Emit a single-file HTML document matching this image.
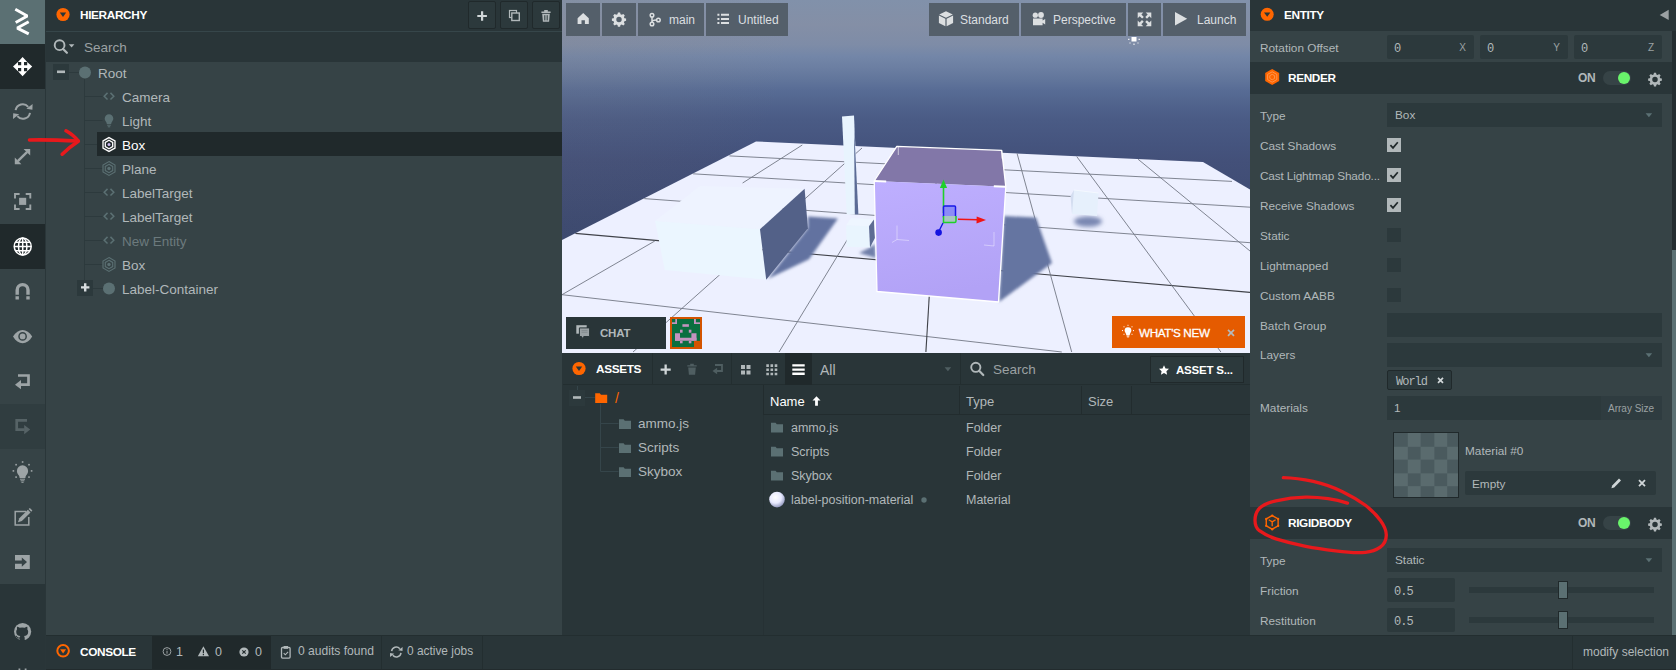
<!DOCTYPE html>
<html lang="en">
<head>
<meta charset="utf-8">
<title>PlayCanvas Editor</title>
<style>
*{box-sizing:border-box;margin:0;padding:0}
html,body{width:1676px;height:670px;overflow:hidden;background:#364346}
body{position:relative;font-family:"Liberation Sans",sans-serif;font-size:13px;color:#b1b8ba;-webkit-font-smoothing:antialiased}
.abs{position:absolute}
svg{position:absolute;overflow:visible}
.t{position:absolute;white-space:nowrap;line-height:1}
.hd{font-weight:bold;color:#fff;font-size:11.8px;letter-spacing:-0.35px}
.mono{font-family:"Liberation Mono",monospace;font-size:12px;letter-spacing:-1px;margin-top:0.5px}

/* left toolbar */
#tb{left:0;top:0;width:45px;height:670px;background:#364346}
#tb .logo{left:0;top:0;width:45px;height:44px;background:#5b7073}
#tb .act{left:0;width:45px;height:45px;background:#20292b}
#tb .dis{left:0;width:45px;height:45px;background:#303d40}
#tb .bot{left:0;top:584px;width:45px;height:86px;background:#293538}
#tbline{left:45px;top:0;width:1px;height:670px;background:#2a3639}

/* hierarchy */
#hier{left:46px;top:0;width:516px;height:635px;background:#364346}
#hier .head{left:0;top:0;width:516px;height:31px;background:#293538}
#hier .sep{left:0;top:31px;width:516px;height:1px;background:#36464a}
#hier .search{left:0;top:32px;width:516px;height:30px;background:#293538}
.hbtn{position:absolute;top:1px;width:28px;height:28px;background:#2c393c;border:1px solid #20292b;border-radius:2px}
.row{position:absolute;left:0;height:24px;width:516px}
.row .t{top:7px;font-size:13.5px}
.sel{position:absolute;left:51px;top:132px;width:465px;height:24px;background:#20292b}

/* viewport */
#vp{left:562px;top:0;width:688px;height:353px;overflow:hidden;background:#47557f}
.vbtn{position:absolute;top:3px;height:33px;background:#545f6a}
.vbtn .t{top:11px;font-size:12px;color:#dcdfe1}

/* assets */
#assets{left:562px;top:353px;width:688px;height:282px;background:#293538}
#asw .t{margin-top:1px}
/* inspector */
#insp{left:1250px;top:0;width:426px;height:635px;background:#364346}
.lbl{position:absolute;left:10px;margin-top:1px;font-size:11.8px;color:#b1b8ba;white-space:nowrap;line-height:1}
.inp{position:absolute;background:#2c393c;height:24px}
.cb{position:absolute;left:137px;width:14px;height:14px;background:#2c393c}
.cb.on{background:#b1b8ba}
.shead{position:absolute;left:0;width:421px;height:32px;background:#293538}
/* status */
#status{left:46px;top:635px;width:1630px;height:35px;background:#293538}
</style>
</head>
<body>

<!-- ================= LEFT TOOLBAR ================= -->
<div id="tb" class="abs">
  <div class="abs logo"></div>
  <div class="abs act" style="top:44px"></div>
  <div class="abs act" style="top:224px"></div>
  <div class="abs dis" style="top:404px"></div>
  <div class="abs bot"></div>
  <!--TB-ICONS-S-->
  <svg class="abs" style="left:0;top:0" width="45" height="670" viewBox="0 0 45 670">
    <!-- logo -->
    <g fill="none" stroke="#ffffff" stroke-width="2.900" stroke-linejoin="miter" stroke-miterlimit="1.400">
      <path d="M15.300 9.300L27.300 15.900 15.700 22.500"/>
      <path d="M28.700 21.800L17.300 28.100 28.700 33.900"/>
    </g>
    <!-- move -->
    <g fill="#ffffff">
      <path d="M22.600 57l4.600 5h-3.200v3.200h3.200v-3.200l5 4.600-5 4.600v-3.200h-3.200v3.200h3.200l-4.600 5-4.600-5h3.200v-3.200h-3.200v3.200l-5-4.600 5-4.600v3.200h3.200v-3.200h-3.200z"/>
    </g>
    <!-- rotate -->
    <g fill="none" stroke="#9da4a6" stroke-width="2">
      <path d="M15.600 110.200a7.200 7.200 0 0 1 12.600-3.400"/>
      <path d="M30 112.800a7.200 7.200 0 0 1-12.600 3.400"/>
    </g>
    <path d="M26.400 108.800l6 .9.200-5.800zM19.200 114.200l-6-.9-.2 5.800z" fill="#9da4a6"/>
    <!-- scale -->
    <path d="M17.800 161.200l9.400-9.400" stroke="#9da4a6" stroke-width="2.400"/>
    <path d="M30.200 149v6.600l-6.600-6.600zM14.800 164.200v-6.600l6.600 6.600z" fill="#9da4a6"/>
    <!-- frame -->
    <g fill="none" stroke="#9da4a6" stroke-width="1.900">
      <path d="M15 198.400V194h4.600M25.700 194h4.600v4.400M30.300 204.600V209h-4.600M19.600 209H15v-4.400"/>
    </g>
    <rect x="19.100" y="197.800" width="7.100" height="7.100" fill="#9da4a6"/>
    <!-- globe -->
    <g fill="none" stroke="#ffffff" stroke-width="1.500">
      <circle cx="22.700" cy="246.500" r="8.500"/>
      <ellipse cx="22.700" cy="246.500" rx="4.200" ry="8.500"/>
      <path d="M22.700 238v17M14.200 246.500h17M15.500 242.200h14.400M15.500 250.800h14.400"/>
    </g>
    <!-- magnet -->
    <path d="M17.200 299.400V290a5.400 5.400 0 0 1 10.800 0v9.400" fill="none" stroke="#9da4a6" stroke-width="3.400"/>
    <path d="M15.200 294.800h4.200v1.400h-4.200zM25.800 294.800h4.200v1.400h-4.200z" fill="#364346"/>
    <!-- eye -->
    <path d="M13 336.600c2.600-4.400 6-6.700 9.600-6.700s7 2.300 9.600 6.700c-2.600 4.400-6 6.700-9.600 6.700s-7-2.300-9.600-6.700z" fill="#9da4a6"/>
    <circle cx="22.600" cy="336.400" r="3.600" fill="none" stroke="#364346" stroke-width="1.500"/>
    <!-- undo -->
    <path d="M18 375.500h10.500v9.200h-8" fill="none" stroke="#9da4a6" stroke-width="2.700"/>
    <path d="M15 384.700l6-4.600v9.200z" fill="#9da4a6"/>
    <!-- redo (disabled) -->
    <path d="M27 420.400H16.700v9.200h8" fill="none" stroke="#566366" stroke-width="2.700"/>
    <path d="M30.200 429.600l-6-4.600v9.200z" fill="#566366"/>
    <!-- bulb -->
    <path d="M22.500 465.300a5.600 5.600 0 0 1 5.600 5.600c0 2.200-1.300 3.400-2 4.600-.5.900-.7 1.700-.7 2.500h-5.800c0-.8-.2-1.600-.7-2.500-.7-1.200-2-2.400-2-4.600a5.600 5.600 0 0 1 5.600-5.600z" fill="#9da4a6"/>
    <path d="M20 479.200h5M20.600 480.800h3.800M21.400 482.300h2.200" stroke="#9da4a6" stroke-width="1"/>
    <g fill="#9da4a6">
      <rect x="21.800" y="461.200" width="1.600" height="1.600"/><rect x="15.300" y="463.900" width="1.600" height="1.600"/><rect x="28.200" y="463.900" width="1.600" height="1.600"/>
      <rect x="12.600" y="470.100" width="1.600" height="1.600"/><rect x="30.800" y="470.100" width="1.600" height="1.600"/>
      <rect x="15.300" y="476.300" width="1.600" height="1.600"/><rect x="28.200" y="476.300" width="1.600" height="1.600"/>
    </g>
    <!-- edit -->
    <path d="M26 511.500H15.200v13.400h13.600V517" fill="none" stroke="#9da4a6" stroke-width="1.500"/>
    <path d="M18 522.200l1.300-4 8.600-8.400 2.600 2.600-8.600 8.500z" fill="#9da4a6"/>
    <path d="M28.600 509.100l1.200-1.200 2.600 2.600-1.200 1.200z" fill="#9da4a6"/>
    <!-- publish -->
    <path d="M15 555.100h14.800V569H15v-5.300h6.800v3l5.200-4.600-5.200-4.700v3H15z" fill="#9da4a6"/>
    <!-- github -->
    <circle cx="22.600" cy="631.600" r="8.600" fill="#9da4a6"/>
    <path d="M19.600 641v-2.600c-2.200.5-2.900-.9-3.500-1.700-.3-.4-.8-.6-.6-.8.900-.3 1.500.5 1.900 1 .7.900 1.600.8 2.300.5.100-.6.400-1 .700-1.300-2.400-.3-4.200-1.400-4.200-4.400 0-1 .3-1.800.9-2.500-.2-.7-.3-1.500.1-2.400 0 0 .9-.1 2.500 1a8 8 0 0 1 5 0c1.600-1.100 2.500-1 2.500-1 .4.900.3 1.700.1 2.400.6.700.9 1.500.9 2.500 0 3-1.800 4.100-4.200 4.400.4.400.700 1 .700 1.900V641z" fill="#293538"/>
    <!-- cut off icon at very bottom -->
    <path d="M19.400 670v-1.600M25.600 670v-1.600" stroke="#9da4a6" stroke-width="1.800"/>
  </svg>
  <!--TB-ICONS-E-->
</div>
<div id="tbline" class="abs"></div>

<!-- ================= HIERARCHY ================= -->
<div id="hier" class="abs">
  <div class="abs head"></div>
  <div class="abs sep"></div>
  <div class="abs search"></div>
  <!--HIER-S-->
  <svg class="abs" style="left:0;top:0" width="516" height="635" viewBox="46 0 516 635">
    <!-- header icon -->
    <circle cx="63" cy="14.5" r="6.6" fill="#ff6600"/>
    <path d="M59.8 12.6h6.4l-3.2 4.4z" fill="#293538"/>
    <!-- search icon -->
    <circle cx="59.600" cy="45.200" r="4.900" fill="none" stroke="#b1b8ba" stroke-width="1.900"/>
    <path d="M63.100 48.900l3.800 3.900" stroke="#b1b8ba" stroke-width="2.200" stroke-linecap="round"/>
    <path d="M68.800 44.200h5.600l-2.800 3.400z" fill="#b1b8ba"/>
    <!-- tree lines -->
    <g stroke="#2d3a3d" stroke-width="1" fill="none">
      <path d="M69 72.5h10"/>
      <path d="M84.5 79V288.5H103"/>
      <path d="M84.5 96.5h18M84.5 120.5h18M84.5 144.5h13M84.5 168.5h18M84.5 192.5h18M84.5 216.5h18M84.5 240.5h18M84.5 264.5h18"/>
    </g>
    <!-- collapse / expand boxes -->
    <rect x="53" y="64" width="16" height="16" fill="#2c393c"/>
    <rect x="57" y="70.5" width="8" height="2.6" fill="#b1b8ba"/>
    <rect x="77" y="280" width="16" height="16" fill="#2c393c"/>
    <path d="M81 286.2h3v-3h2.4v3h3v2.4h-3v3h-2.4v-3h-3z" fill="#d7dcde"/>
    <!-- circles -->
    <circle cx="85" cy="72.5" r="6" fill="#5b7073"/>
    <circle cx="109" cy="288.5" r="6" fill="#5b7073"/>
    <!-- code icons -->
    <g stroke="#5b7073" stroke-width="1.5" fill="none" stroke-linecap="square">
      <path id="cd" d="M107 93.4l-2.8 2.8 2.8 2.8M111 93.4l2.8 2.8-2.8 2.8"/>
      <use href="#cd" y="96"/><use href="#cd" y="120"/><use href="#cd" y="144"/>
    </g>
    <!-- light bulb -->
    <path d="M109 114.2a4.3 4.3 0 0 1 4.3 4.3c0 1.7-1 2.7-1.6 3.7-.4.7-.5 1.3-.5 1.8h-4.4c0-.5-.1-1.100-.5-1.800-.6-1-1.600-2-1.600-3.700a4.300 4.300 0 0 1 4.300-4.300z" fill="#5b7073"/>
    <path d="M107.2 125.2h3.600M107.800 126.800h2.400" stroke="#5b7073" stroke-width="1"/>
    <!-- hex icons -->
    <g id="hx" fill="none" stroke="#5b7073" stroke-width="1.100">
      <path d="M109 161.600l6 3.400v7l-6 3.400-6-3.400v-7z"/>
      <path d="M109 164.300l3.700 2.100v4.200l-3.700 2.100-3.700-2.100v-4.200z"/>
      <circle cx="109" cy="168.500" r="1.700" fill="#5b7073" stroke="none"/>
    </g>
    <use href="#hx" y="96"/>
  </svg>
  <div class="sel"></div>
  <svg class="abs" style="left:51px;top:133px" width="24" height="24" viewBox="97 133 24 24">
    <g fill="none" stroke="#ffffff" stroke-width="1.300">
      <path d="M109 137.600l6 3.400v7l-6 3.400-6-3.400v-7z"/>
      <path d="M109 140.300l3.700 2.100v4.200l-3.700 2.100-3.700-2.100v-4.200z"/>
      <circle cx="109" cy="144.500" r="1.500" fill="#c9b8f0" stroke="none"/>
    </g>
  </svg>
  <div class="t hd" style="left:34px;top:10px">HIERARCHY</div>
  <div class="hbtn" style="left:422px"></div>
  <div class="hbtn" style="left:454px"></div>
  <div class="hbtn" style="left:486px"></div>
  <svg class="abs" style="left:0;top:1px" width="516" height="32" viewBox="46 0 516 32">
    <path d="M477.300 13.900h3.700v-3.700h2.200v3.700h3.700v2.200h-3.700v3.700h-2.200v-3.700h-3.700z" fill="#d0d6d8"/>
    <rect x="509.500" y="9.500" width="7" height="7" fill="none" stroke="#b1b8ba" stroke-width="1.200"/>
    <rect x="511.800" y="12" width="7.500" height="7.500" fill="#2c393c" stroke="#b1b8ba" stroke-width="1.400"/>
    <path d="M541.400 10.600h9.200v1.400h-9.200zM544.200 9h3.600v1.600h-3.600zM542.200 12.800h7.600l-.7 8h-6.200z" fill="#b1b8ba"/>
    <path d="M544.500 14.200v5.200M546 14.200v5.200M547.500 14.200v5.200" stroke="#2c393c" stroke-width=".7"/>
  </svg>
  <div class="t" style="left:38px;top:41px;font-size:13.500px;color:#9ba1a3">Search</div>
  <div class="row" style="top:60px"><div class="t" style="left:52px">Root</div></div>
  <div class="row" style="top:84px"><div class="t" style="left:76px">Camera</div></div>
  <div class="row" style="top:108px"><div class="t" style="left:76px">Light</div></div>
  <div class="row" style="top:132px"><div class="t" style="left:76px;color:#fff">Box</div></div>
  <div class="row" style="top:156px"><div class="t" style="left:76px">Plane</div></div>
  <div class="row" style="top:180px"><div class="t" style="left:76px">LabelTarget</div></div>
  <div class="row" style="top:204px"><div class="t" style="left:76px">LabelTarget</div></div>
  <div class="row" style="top:228px"><div class="t" style="left:76px;color:#6c7a7d">New Entity</div></div>
  <div class="row" style="top:252px"><div class="t" style="left:76px">Box</div></div>
  <div class="row" style="top:276px"><div class="t" style="left:76px">Label-Container</div></div>
  <!--HIER-E-->
</div>

<!-- ================= VIEWPORT ================= -->
<div id="vp" class="abs">
  <!--SCENE-S-->
  <svg class="abs" style="left:0;top:0" width="688" height="353" viewBox="562 0 688 353">
    <defs>
      <linearGradient id="sky" x1="0" y1="0" x2="0" y2="1">
        <stop offset="0.000" stop-color="#8191aa"/>
        <stop offset="0.070" stop-color="#848fa6"/>
        <stop offset="0.127" stop-color="#7e8ca7"/>
        <stop offset="0.160" stop-color="#7386a8"/>
        <stop offset="0.190" stop-color="#6c7fa2"/>
        <stop offset="0.227" stop-color="#61759b"/>
        <stop offset="0.255" stop-color="#586c95"/>
        <stop offset="0.283" stop-color="#53668f"/>
        <stop offset="0.310" stop-color="#4e608a"/>
        <stop offset="0.340" stop-color="#4a5b85"/>
        <stop offset="0.370" stop-color="#485882"/>
        <stop offset="0.410" stop-color="#45547e"/>
        <stop offset="0.456" stop-color="#435079"/>
        <stop offset="0.635" stop-color="#3d4a70"/>
        <stop offset="1.000" stop-color="#394468"/>
      </linearGradient>
      <radialGradient id="skyh" gradientUnits="userSpaceOnUse" cx="562" cy="30" r="230">
        <stop offset="0" stop-color="#9b8263" stop-opacity="0.100"/>
        <stop offset="1" stop-color="#9b8263" stop-opacity="0"/>
      </radialGradient>
      <linearGradient id="cubef" x1="0" y1="0" x2="0.200" y2="1">
        <stop offset="0" stop-color="#beafff"/>
        <stop offset="1" stop-color="#b2a2f6"/>
      </linearGradient>
      <filter id="b2" x="-20%" y="-20%" width="140%" height="140%"><feGaussianBlur stdDeviation="1.600"/></filter>
      <filter id="b3" x="-30%" y="-30%" width="160%" height="160%"><feGaussianBlur stdDeviation="2.200"/></filter>
      <clipPath id="plane"><path d="M756 141.500L1203 162 1250 189.500V353H562V240z"/></clipPath>
    </defs>
    <rect x="562" y="0" width="688" height="353" fill="url(#sky)"/>
    <rect x="562" y="0" width="688" height="353" fill="url(#skyh)"/>
    <!-- ground plane -->
    <path d="M756 141.500L1203 162 1250 189.500V353H562V240z" fill="#edf0ff"/>
    <g clip-path="url(#plane)">
      <!-- grid lines -->
      <g stroke="#555a66" stroke-width="0.900" fill="none" opacity="0.800">
        <path d="M729.400 155.900L1232 181.400"/>
        <path d="M693 173.800L1250 207.200"/>
        <path d="M644.200 198.600L1250 242.700"/>
        <path d="M575.300 233.400L1250 292.400" stroke="#15171c" stroke-width="1.100"/>
        <path d="M562 294.700L1061.800 352"/>
        <path d="M802.300 145L742.600 183"/>
        <path d="M862 148L633 352"/>
        <path d="M654.800 241L562 294.700"/>
        <path d="M938 150L925.900 352" stroke="#15171c" stroke-width="1.100"/>
        <path d="M1017 153.200L1071.700 352"/>
        <path d="M1076.700 156.500L1220.900 352"/>
        <path d="M1138 159.200L1250 251"/>
        <path d="M852 232L779 352"/>
      </g>
      <!-- shadows -->
      <path d="M768 278.700L807.900 228 807.900 216.600 838 218.500 809 259.300z" fill="#6272a0" filter="url(#b2)"/>
      <path d="M1004 216L1036 217.500 1052 263 999 302z" fill="#6575a1" filter="url(#b2)"/>
      <ellipse cx="1088" cy="221.500" rx="14" ry="5.200" fill="#7a88b2" filter="url(#b3)"/>
      <path d="M870 247.600L875 244 876 258 859 253z" fill="#6f7fa9" filter="url(#b2)"/>
    </g>
    <!-- pillar -->
    <path d="M842 116.500L854 115.500 858.400 214.600 846.700 214.600z" fill="#e8f4fe"/>
    <path d="M854 125L858.400 214.600 854.800 214.600z" fill="#5b6b95"/>
    <!-- small base cube -->
    <path d="M846.100 225.300L851 218 874 219.500 869 226.300z" fill="#eef6ff"/>
    <path d="M846.100 225.300L869 226.300 870 247.600 846.700 246.700z" fill="#e9f5fe"/>
    <path d="M869 226.300L873.900 219.500 874.900 238 870 247.600z" fill="#5d6c93"/>
    <!-- long box -->
    <path d="M655.100 220.900L760 229.200 804.600 188.800 700 186z" fill="#eef3ff"/>
    <path d="M655.100 220.900L760 229.200 766.200 279.700 664.800 270z" fill="#ebf6ff"/>
    <path d="M760 229.200L804.600 188.800 807.900 228.200 766.200 279.700z" fill="#536188"/>
    <!-- selected cube -->
    <path d="M874.200 181L896.800 146.400 1001.700 150.400 1005.800 186.800z" fill="#8277a8"/>
    <path d="M874.200 181L1005.800 186.800 998.500 302 877 291.500z" fill="url(#cubef)"/>
    <g fill="none" stroke="#ffffff" stroke-width="1.300" stroke-linejoin="round">
      <path d="M874.200 181L896.800 146.400 1001.700 150.400 1005.800 186.800 998.500 302 877 291.500z"/>
      <path d="M874.200 181l12 .600M1005.800 186.800l-12-.600" stroke-width="2"/>
      <path d="M898.300 147v8M1001.700 150.700l.300 8" stroke-width="1" opacity=".6"/>
      <path d="M897 225.500v14l-5 3M897 239.500l12 1M994 232v14l-10-1" stroke-width=".8" opacity=".5"/>
    </g>
    <!-- small far cube -->
    <path d="M1070.500 196L1074 190 1076 212 1072 214z" fill="#d3ddf0"/>
    <path d="M1074 190L1098.500 193 1097 216 1072 214z" fill="#e6f0fc"/>
    <path d="M1074 190L1098.500 193" stroke="#f4f9ff" stroke-width="1"/>
    <!-- gizmo -->
    <path d="M943.500 213V187" stroke="#1fd02a" stroke-width="1.600"/>
    <path d="M943.500 179.500l3.600 8.500h-7.200z" fill="#1fd02a"/>
    <rect x="943.500" y="206" width="12" height="12" rx="1" fill="#8c8cf6" stroke="#1818e8" stroke-width="1.500"/>
    <path d="M943.500 216v6.500h11q1.500 0 1.500-1.500V216" fill="#a9c6c0" stroke="#1fd02a" stroke-width="1.500"/>
    <path d="M958 219.200l20 .500" stroke="#f01414" stroke-width="1.600"/>
    <path d="M986 220l-9.500 3.400.200-7z" fill="#f01414"/>
    <path d="M943 223l-3.500 7" stroke="#1414e0" stroke-width="1.400"/>
    <circle cx="938.600" cy="232.600" r="3.300" fill="#1414e0"/>
    <!-- sun gizmo -->
    <g fill="#ffffff">
      <rect x="1131.500" y="37" width="5" height="4.500"/>
      <rect x="1133.500" y="33.500" width="1" height="1.500"/><rect x="1133.500" y="43.500" width="1" height="1.500"/>
      <rect x="1128" y="38.800" width="1.500" height="1"/><rect x="1138.500" y="38.800" width="1.500" height="1"/>
      <rect x="1129.500" y="35" width="1" height="1"/><rect x="1137.500" y="35" width="1" height="1"/>
      <rect x="1129.500" y="42.500" width="1" height="1"/><rect x="1137.500" y="42.500" width="1" height="1"/>
    </g>
  </svg>
  <!--SCENE-E-->
  <!--VPUI-S-->
  <div id="vpw" class="abs" style="left:1px;top:0;width:687px;height:353px">
  <div class="vbtn" style="left:3px;width:34px"></div>
  <div class="vbtn" style="left:39px;width:34px"></div>
  <div class="vbtn" style="left:75px;width:66px"><div class="t" style="left:31px">main</div></div>
  <div class="vbtn" style="left:143px;width:82px"><div class="t" style="left:32px">Untitled</div></div>
  <div class="vbtn" style="left:366px;width:90px"><div class="t" style="left:31px">Standard</div></div>
  <div class="vbtn" style="left:458px;width:105px"><div class="t" style="left:32px">Perspective</div></div>
  <div class="vbtn" style="left:565px;width:33px"></div>
  <div class="vbtn" style="left:600px;width:83px"><div class="t" style="left:34px">Launch</div></div>
  <svg class="abs" style="left:0;top:0" width="687" height="40" viewBox="563 0 687 40">
    <g fill="#dcdfe1">
      <!-- home -->
      <path d="M583.200 13l5.600 5.200v5.800h-3.900v-3.800h-3.400v3.800h-3.900v-5.800z"/>
      <!-- gear -->
      <path id="gear" d="M617.900 12.600h2.200l.4 1.700 1.300.5 1.500-.9 1.500 1.500-.9 1.500.5 1.300 1.700.4v2.200l-1.700.4-.5 1.300.9 1.500-1.500 1.500-1.500-.9-1.300.5-.4 1.700h-2.200l-.4-1.700-1.300-.5-1.500.9-1.500-1.500.9-1.500-.5-1.300-1.700-.4v-2.200l1.700-.4.5-1.300-.9-1.500 1.500-1.500 1.500.9 1.300-.5zM619 16.800a2.700 2.700 0 1 0 0 5.400 2.700 2.700 0 0 0 0-5.400z" fill-rule="evenodd"/>
      <!-- list -->
      <path d="M717.400 13.800h2v2h-2zM721 13.800h8v2h-8zM717.400 17.900h2v2h-2zM721 17.900h8v2h-8zM717.400 22h2v2h-2zM721 22h8v2h-8z"/>
      <!-- cube -->
      <path d="M946 11.200l6.800 3.200-6.800 3.300-6.800-3.300zM938.900 15.600l6.500 3.100v7.500l-6.500-3.300zM953.100 15.600v7.300l-6.500 3.300v-7.500z"/>
      <!-- camera -->
      <circle cx="1035.300" cy="15.200" r="2.600"/><circle cx="1041" cy="15" r="2.900"/>
      <path d="M1033 18.600h9.600v2l2.600-1.700v5.600l-2.600-1.700v2.400H1033z"/>
      <!-- fullscreen -->
      <path d="M1137.700 12.600h5.600l-1.900 1.900 2.400 2.400-1.700 1.700-2.400-2.400-2 2zM1151.300 12.600v5.600l-1.900-1.900-2.400 2.400-1.700-1.700 2.400-2.400-2-2zM1137.700 26.200v-5.600l1.900 1.900 2.400-2.400 1.700 1.700-2.400 2.400 2 2zM1151.300 26.200h-5.600l1.900-1.900-2.400-2.400 1.700-1.700 2.400 2.400 2-2z"/>
      <!-- play -->
      <path d="M1175 12l12.200 6.800-12.200 6.800z"/>
    </g>
    <!-- branch -->
    <g fill="none" stroke="#dcdfe1" stroke-width="1.500">
      <circle cx="652" cy="15.200" r="1.800"/><circle cx="652" cy="24" r="1.800"/><circle cx="658.400" cy="20" r="1.800"/>
      <path d="M652 17v5.200M652 22c0-2 2-2 4.600-2"/>
    </g>
  </svg>
  <!-- chat -->
  <div class="abs" style="left:3px;top:317px;width:100px;height:32px;background:#293538">
    <div class="t" style="left:34px;top:11px;font-size:11.500px;font-weight:bold;color:#b1b8ba;letter-spacing:-0.200px">CHAT</div>
    <svg style="left:10px;top:8px" width="16" height="16" viewBox="0 0 16 16">
      <path d="M.3.200h10.400v8.500H.3z" fill="#b1b8ba"/>
      <path d="M3.400 2.900h10.200v8.600H8l-2.500 2.400v-2.400H3.400z" fill="#9aa1a4" stroke="#293538" stroke-width="1"/>
      <path d="M5.500 5.600h6M5.500 7.300h6" stroke="#7d8689" stroke-width=".8"/>
    </svg>
  </div>
  <!-- avatar -->
  <div class="abs" style="left:107px;top:317px;width:32px;height:32px;background:#d35400">
    <svg style="left:2px;top:2px" width="28" height="28" viewBox="0 0 28 28">
      <rect width="28" height="28" fill="#0b6f40"/>
      <g fill="#c493bf">
        <rect x="3.300" y="0" width="1.700" height="5"/><rect x="0" y="3.300" width="5" height="1.700"/>
        <rect x="22" y="0" width="1.900" height="5"/><rect x="22" y="3.300" width="6" height="1.700"/>
        <rect x="10.400" y="5.200" width="6.500" height="2.600"/>
        <rect x="8" y="10.700" width="2.600" height="3"/><rect x="16.800" y="10.700" width="2.600" height="3"/>
        <rect x="3" y="14.250" width="5" height="7.500"/><rect x="19.400" y="14.250" width="5.100" height="7.500"/>
        <rect x="3" y="18.750" width="21.500" height="3"/>
        <rect x="8" y="21.700" width="2.600" height="2.600"/><rect x="16.800" y="21.700" width="2.600" height="2.600"/>
      </g>
      <rect x="22" y="21.900" width="6" height="6.100" fill="#d35400"/>
    </svg>
  </div>
  <!-- whats new -->
  <div class="abs" style="left:549px;top:316px;width:133px;height:32px;background:#e55b00">
    <div class="t" style="left:27px;top:11px;font-size:11.700px;color:#fff;letter-spacing:-0.350px;-webkit-text-stroke:0.300px #fff">WHAT'S NEW</div>
    <svg style="left:8px;top:8px" width="16" height="16" viewBox="0 0 16 16">
      <path d="M8 3.200a3.400 3.400 0 0 1 3.400 3.400c0 1.300-.8 2-1.200 2.800-.3.500-.4 1-.4 1.500H6.200c0-.5-.1-1-.4-1.500-.4-.8-1.200-1.500-1.200-2.800A3.400 3.400 0 0 1 8 3.200z" fill="#fff"/>
      <path d="M6.500 11.800h3M6.900 12.900h2.200" stroke="#fff" stroke-width=".9"/>
      <g fill="#fff"><rect x="7.500" y=".8" width="1" height="1"/><rect x="3.500" y="2.300" width="1" height="1"/><rect x="11.500" y="2.300" width="1" height="1"/><rect x="2" y="6.100" width="1" height="1"/><rect x="13" y="6.100" width="1" height="1"/><rect x="3.500" y="9.800" width="1" height="1"/><rect x="11.500" y="9.800" width="1" height="1"/></g>
    </svg>
    <svg style="left:114px;top:12px" width="10" height="10" viewBox="0 0 10 10"><path d="M2 1.800l6 6M8 1.800l-6 6" stroke="#b4bbbe" stroke-width="1.700"/></svg>
  </div>
  </div>
  <!--VPUI-E-->
</div>

<!-- ================= ASSETS ================= -->
<div id="assets" class="abs">
  <!--ASSETS-S-->
  <div id="asw" class="abs" style="left:1px;top:0;width:687px;height:282px">
  <div class="abs" style="left:0;top:0;width:687px;height:32px;background:#293538;border-bottom:1px solid #232e30"></div>
  <div class="abs" style="left:89px;top:0;width:1px;height:32px;background:#232e30"></div>
  <div class="abs" style="left:168px;top:0;width:1px;height:32px;background:#232e30"></div>
  <div class="abs" style="left:222px;top:0;width:27px;height:32px;background:#20292b"></div>
  <div class="abs" style="left:397px;top:0;width:1px;height:32px;background:#232e30"></div>
  <div class="abs" style="left:587px;top:3px;width:94px;height:27px;background:#2c393c;border:1px solid #20292b"></div>
  <!-- table header -->
  <div class="abs" style="left:200px;top:32px;width:487px;height:30px;background:#293538;border-left:1px solid #222c2e;border-bottom:1px solid #222c2e"></div>
  <div class="abs" style="left:200px;top:62px;width:1px;height:220px;background:#263134"></div>
  <div class="abs" style="left:396px;top:33px;width:1px;height:28px;background:#222c2e"></div>
  <div class="abs" style="left:518px;top:33px;width:1px;height:28px;background:#222c2e"></div>
  <div class="abs" style="left:568px;top:33px;width:1px;height:28px;background:#222c2e"></div>
  <svg class="abs" style="left:0;top:0" width="687" height="282" viewBox="563 353 687 282">
    <circle cx="579" cy="368.500" r="6.600" fill="#ff6600"/>
    <path d="M575.800 366.600h6.400l-3.200 4.400z" fill="#293538"/>
    <!-- plus -->
    <path d="M660.600 368.400h3.900v-3.900h2.300v3.900h3.900v2.300h-3.900v3.900h-2.300v-3.900h-3.900z" fill="#d0d6d8"/>
    <!-- trash (disabled) -->
    <path d="M687.300 365.200h9.400v1.400h-9.400zM690.200 363.700h3.600v1.500h-3.600zM688.200 367.400h7.600l-.7 7.400h-6.200z" fill="#4f5e61"/>
    <!-- arrow disabled -->
    <path d="M715 365h7v6h-6" fill="none" stroke="#4f5e61" stroke-width="1.800"/>
    <path d="M712.500 371l4.600-3.300v6.600z" fill="#4f5e61"/>
    <!-- grid 2x2 -->
    <path d="M741 365h4v4h-4zM746.500 365h4v4h-4zM741 370.500h4v4h-4zM746.500 370.500h4v4h-4z" fill="#b1b8ba"/>
    <!-- grid 3x3 -->
    <g fill="#b1b8ba">
      <path d="M766.300 364.300h2.600v2.600h-2.600zM770.500 364.300h2.600v2.600h-2.600zM774.700 364.300h2.600v2.600h-2.600z"/>
      <path d="M766.300 368.500h2.600v2.600h-2.600zM770.500 368.500h2.600v2.600h-2.600zM774.700 368.500h2.600v2.600h-2.600z"/>
      <path d="M766.300 372.700h2.600v2.600h-2.600zM770.500 372.700h2.600v2.600h-2.600zM774.700 372.700h2.600v2.600h-2.600z"/>
    </g>
    <!-- list -->
    <path d="M792.300 364.200h12.400v2.400h-12.400zM792.300 368.400h12.400v2.400h-12.400zM792.300 372.600h12.400v2.400h-12.400z" fill="#ffffff"/>
    <!-- dropdown arrow -->
    <path d="M944.600 367.300h6.600l-3.300 4z" fill="#4f5e61"/>
    <!-- search -->
    <circle cx="975.800" cy="367.300" r="4.600" fill="none" stroke="#b1b8ba" stroke-width="1.900"/>
    <path d="M979.100 370.800l4.200 4.200" stroke="#b1b8ba" stroke-width="2.200" stroke-linecap="round"/>
    <!-- star -->
    <path d="M1164 365.200l1.500 3.200 3.500.4-2.600 2.400.7 3.500-3.100-1.800-3.100 1.800.7-3.500-2.600-2.400 3.500-.4z" fill="#ffffff"/>
    <!-- tree -->
    <g stroke="#35454a" stroke-width="1" fill="none">
      <path d="M577.500 386v4M585 397.500h10"/>
      <path d="M600.500 404v67.500h18M600.500 423.500h18M600.500 447.500h18"/>
    </g>
    <rect x="569" y="390" width="16" height="16" fill="#2c393c"/>
    <rect x="573" y="396.200" width="8" height="2.600" fill="#b1b8ba"/>
    <path id="fo" d="M595.200 393.300h4.600l1.200 1.500h6.200v8.200h-12z" fill="#ff6600"/>
    <g fill="#5b7073">
      <path id="fg" d="M619 419.200h4.600l1.200 1.500h6.200v8.200h-12z"/>
      <use href="#fg" y="24"/><use href="#fg" y="48"/>
      <use href="#fg" x="152" y="3.500"/><use href="#fg" x="152" y="27.500"/><use href="#fg" x="152" y="51.500"/>
    </g>
    <!-- sort arrow -->
    <path d="M816.500 396.200l4 4.400h-2.600v5.200h-2.800v-5.200h-2.600z" fill="#ffffff"/>
    <!-- material sphere -->
    <defs><radialGradient id="sph" cx="0.400" cy="0.350" r="0.750"><stop offset="0" stop-color="#ffffff"/><stop offset="0.500" stop-color="#e8eaff"/><stop offset="0.850" stop-color="#9aa0c4"/><stop offset="1" stop-color="#6b7196"/></radialGradient></defs>
    <circle cx="777" cy="499.600" r="7.800" fill="url(#sph)"/>
    <circle cx="924" cy="500" r="2.700" fill="#5b7073"/>
  </svg>
  <div class="t hd" style="left:33px;top:10px">ASSETS</div>
  <div class="t" style="left:257px;top:9px;font-size:14px;color:#b1b8ba">All</div>
  <div class="t" style="left:430px;top:9px;font-size:13.500px;color:#9ba1a3">Search</div>
  <div class="t" style="left:613px;top:11px;font-size:11.500px;color:#fff;font-weight:bold;letter-spacing:-0.200px">ASSET S...</div>
  <div class="t" style="left:52px;top:37px;font-size:14px;color:#ff6600">/</div>
  <div class="t" style="left:75px;top:63px;font-size:13.500px">ammo.js</div>
  <div class="t" style="left:75px;top:87px;font-size:13.500px">Scripts</div>
  <div class="t" style="left:75px;top:111px;font-size:13.500px">Skybox</div>
  <div class="t" style="left:207px;top:41px;font-size:13px;color:#fff">Name</div>
  <div class="t" style="left:403px;top:41px;font-size:13px">Type</div>
  <div class="t" style="left:525px;top:41px;font-size:13px">Size</div>
  <div class="t" style="left:228px;top:68px;font-size:12.500px">ammo.js</div>
  <div class="t" style="left:228px;top:92px;font-size:12.500px">Scripts</div>
  <div class="t" style="left:228px;top:116px;font-size:12.500px">Skybox</div>
  <div class="t" style="left:228px;top:140px;font-size:12.500px">label-position-material</div>
  <div class="t" style="left:403px;top:68px;font-size:12.500px">Folder</div>
  <div class="t" style="left:403px;top:92px;font-size:12.500px">Folder</div>
  <div class="t" style="left:403px;top:116px;font-size:12.500px">Folder</div>
  <div class="t" style="left:403px;top:140px;font-size:12.500px">Material</div>
  </div>
  <!--ASSETS-E-->
</div>

<!-- ================= INSPECTOR ================= -->
<div id="insp" class="abs">
  <!--INSP-S-->
  <!-- scrollbar -->
  <div class="abs" style="left:422px;top:31px;width:4px;height:604px;background:#232d30"></div>
  <div class="abs" style="left:422px;top:250px;width:4px;height:385px;background:#5b7073"></div>
  <!-- entity header -->
  <div class="abs" style="left:0;top:0;width:426px;height:31px;background:#293538"></div>
  <div class="t hd" style="left:34px;top:10px">ENTITY</div>
  <!-- rotation offset -->
  <div class="lbl" style="top:42px">Rotation Offset</div>
  <div class="inp" style="left:137px;top:35px;width:87px;border-radius:2px"><span class="t mono" style="left:7px;top:7px">0</span><span class="t" style="right:8px;top:8px;font-size:10px;color:#9ba1a3">X</span></div>
  <div class="inp" style="left:230px;top:35px;width:88px;border-radius:2px"><span class="t mono" style="left:7px;top:7px">0</span><span class="t" style="right:8px;top:8px;font-size:10px;color:#9ba1a3">Y</span></div>
  <div class="inp" style="left:324px;top:35px;width:88px;border-radius:2px"><span class="t mono" style="left:7px;top:7px">0</span><span class="t" style="right:8px;top:8px;font-size:10px;color:#9ba1a3">Z</span></div>
  <!-- render header -->
  <div class="shead" style="top:62px;width:422px"></div>
  <div class="t hd" style="left:38px;top:73px">RENDER</div>
  <div class="t" style="left:328px;top:72px;font-size:12px;font-weight:bold;color:#b1b8ba;letter-spacing:-0.300px">ON</div>
  <div class="abs" style="left:353px;top:71px;width:28px;height:14px;border-radius:7px;background:#364346"></div>
  <div class="abs" style="left:368px;top:72px;width:12px;height:12px;border-radius:6px;background:#69f36b"></div>
  <!-- render rows -->
  <div class="lbl" style="top:110px">Type</div>
  <div class="inp" style="left:137px;top:103px;width:275px"><span class="t" style="left:8px;top:7px;font-size:11.800px">Box</span></div>
  <div class="lbl" style="top:140px">Cast Shadows</div>
  <div class="cb on" style="top:138px"></div>
  <div class="lbl" style="top:170px;letter-spacing:-0.150px">Cast Lightmap Shado...</div>
  <div class="cb on" style="top:168px"></div>
  <div class="lbl" style="top:200px">Receive Shadows</div>
  <div class="cb on" style="top:198px"></div>
  <div class="lbl" style="top:230px">Static</div>
  <div class="cb" style="top:228px"></div>
  <div class="lbl" style="top:260px">Lightmapped</div>
  <div class="cb" style="top:258px"></div>
  <div class="lbl" style="top:290px">Custom AABB</div>
  <div class="cb" style="top:288px"></div>
  <div class="lbl" style="top:320px">Batch Group</div>
  <div class="inp" style="left:137px;top:313px;width:275px"></div>
  <div class="lbl" style="top:349px">Layers</div>
  <div class="inp" style="left:137px;top:343px;width:275px"></div>
  <div class="abs" style="left:137px;top:370px;width:65px;height:20px;background:#2c393c;border:1px solid #20292b;border-radius:2px"><span class="t mono" style="left:8px;top:4px">World</span></div>
  <div class="lbl" style="top:402px">Materials</div>
  <div class="inp" style="left:137px;top:396px;width:275px"><span class="t" style="left:7px;top:7px;font-size:11.800px">1</span>
    <div class="abs" style="left:214px;top:0;width:61px;height:24px;background:#2f3c40"></div>
    <span class="t" style="left:221px;top:8px;font-size:10px;color:#9ba1a3">Array Size</span></div>
  <!-- material asset -->
  <div class="abs" style="left:143px;top:432px;width:66px;height:66px;border:1px solid #20292b;background-color:#4a5a5e;background-image:conic-gradient(#5a6b6e 25%,#4a5a5e 0 50%,#5a6b6e 0 75%,#4a5a5e 0);background-size:26.600px 26.600px;background-position:0 0"></div>
  <div class="t" style="left:215px;top:446px;font-size:11.800px">Material #0</div>
  <div class="inp" style="left:215px;top:471px;width:191px;border-radius:2px"><span class="t" style="left:7px;top:8px;font-size:11.800px">Empty</span></div>
  <!-- rigidbody header -->
  <div class="shead" style="top:507px;width:422px"></div>
  <div class="t hd" style="left:38px;top:518px">RIGIDBODY</div>
  <div class="t" style="left:328px;top:517px;font-size:12px;font-weight:bold;color:#b1b8ba;letter-spacing:-0.300px">ON</div>
  <div class="abs" style="left:353px;top:516px;width:28px;height:14px;border-radius:7px;background:#364346"></div>
  <div class="abs" style="left:368px;top:517px;width:12px;height:12px;border-radius:6px;background:#69f36b"></div>
  <div class="lbl" style="top:555px">Type</div>
  <div class="inp" style="left:137px;top:548px;width:275px"><span class="t" style="left:8px;top:7px;font-size:11.800px">Static</span></div>
  <div class="lbl" style="top:585px">Friction</div>
  <div class="inp" style="left:137px;top:578px;width:68px;border-radius:2px"><span class="t mono" style="left:7px;top:7px">0.5</span></div>
  <div class="abs" style="left:219px;top:587px;width:185px;height:6px;background:#2c393c"></div>
  <div class="abs" style="left:308px;top:581px;width:10px;height:18px;background:#5b7073;border:1px solid #20292b"></div>
  <div class="lbl" style="top:615px">Restitution</div>
  <div class="inp" style="left:137px;top:608px;width:68px;border-radius:2px"><span class="t mono" style="left:7px;top:7px">0.5</span></div>
  <div class="abs" style="left:219px;top:617px;width:185px;height:6px;background:#2c393c"></div>
  <div class="abs" style="left:308px;top:611px;width:10px;height:18px;background:#5b7073;border:1px solid #20292b"></div>
  <svg class="abs" style="left:0;top:0" width="426" height="635" viewBox="1250 0 426 635">
    <circle cx="1267.200" cy="14.300" r="6.500" fill="#ff6600"/>
    <path d="M1264 12.400h6.400l-3.200 4.400z" fill="#293538"/>
    <path d="M1659.700 14.900l9-5.200v10.400z" fill="#9ba1a3"/>
    <!-- render icon -->
    <g id="ric">
      <path d="M1272.200 69l7 4v8l-7 4-7-4v-8z" fill="#ff6600"/>
      <path d="M1272.200 71.800l4.600 2.600v5.200l-4.600 2.600-4.600-2.600v-5.200z" fill="none" stroke="#ff9a55" stroke-width=".9"/>
      <path d="M1272.200 74.300l2.400 1.400v2.700l-2.400 1.400-2.400-1.400v-2.700z" fill="none" stroke="#ff9a55" stroke-width=".9"/>
    </g>
    <!-- gear icons -->
    <g fill="#b1b8ba">
      <path id="g2" transform="translate(1655 79.600) scale(.880) translate(-1655 -79.600)" d="M1653.800 71.800h2.400l.4 1.900 1.400.6 1.700-1.100 1.700 1.700-1.100 1.700.6 1.400 1.900.4v2.400l-1.900.4-.6 1.400 1.100 1.700-1.700 1.700-1.700-1.100-1.400.6-.4 1.900h-2.400l-.4-1.900-1.400-.6-1.700 1.100-1.700-1.700 1.100-1.700-.6-1.400-1.900-.4v-2.400l1.900-.4.6-1.400-1.100-1.700 1.700-1.700 1.700 1.100 1.400-.6zM1655 76.500a3.100 3.100 0 1 0 0 6.200 3.100 3.100 0 0 0 0-6.200z" fill-rule="evenodd"/>
      <use href="#g2" y="445"/>
    </g>
    <!-- select arrows -->
    <g fill="#5b7073">
      <path id="sa" d="M1645.600 113.300h6.600l-3.300 4z"/>
      <use href="#sa" y="240"/><use href="#sa" y="445"/>
    </g>
    <!-- checks -->
    <g fill="none" stroke="#20292b" stroke-width="1.700">
      <path id="ck" d="M1390.400 145.200l2.600 2.700 4.800-5.600"/>
      <use href="#ck" y="30"/><use href="#ck" y="60"/>
    </g>
    <!-- tag x -->
    <path d="M1438 377.800l5 5M1443 377.800l-5 5" stroke="#d0d6d8" stroke-width="1.700"/>
    <!-- pencil + x -->
    <path d="M1611.400 488.200l.8-2.800 6.800-6.800 2 2-6.800 6.800z" fill="#d0d6d8"/>
    <path d="M1639 480.200l6 6M1645 480.200l-6 6" stroke="#d0d6d8" stroke-width="1.800"/>
    <!-- rigidbody icon -->
    <g transform="translate(1272.200 522.400) scale(.900) translate(-1272.200 -522.400)">
    <path d="M1272.200 514.800l6.600 3.800v7.600l-6.600 3.800-6.600-3.800v-7.600z" fill="none" stroke="#ff6600" stroke-width="1.600"/>
    <path d="M1268.400 519.400l3.800 2.400 3.800-2.400M1272.200 521.800v4.800" fill="none" stroke="#ff6600" stroke-width="1.500"/>
    <g fill="#ff6600"><circle cx="1272.200" cy="514.800" r="1.300"/><circle cx="1278.800" cy="518.600" r="1.300"/><circle cx="1278.800" cy="526.200" r="1.300"/><circle cx="1272.200" cy="530" r="1.300"/><circle cx="1265.600" cy="526.200" r="1.300"/><circle cx="1265.600" cy="518.600" r="1.300"/></g>
    </g>
  </svg>
  <!--INSP-E-->
</div>

<!-- ================= STATUS BAR ================= -->
<div id="status" class="abs">
  <!--STATUS-S-->
  <div class="abs" style="left:0;top:0;width:1630px;height:1px;background:#232e30"></div>
  <div class="abs" style="left:106px;top:1px;width:119px;height:34px;background:#20292b"></div>
  <div class="abs" style="left:335px;top:1px;width:1px;height:34px;background:#232e30"></div>
  <div class="abs" style="left:436px;top:1px;width:1px;height:34px;background:#232e30"></div>
  <div class="abs" style="left:1526px;top:1px;width:1px;height:34px;background:#232e30"></div>
  <div class="abs" style="left:0;top:34px;width:1630px;height:1px;background:#222b2d"></div>
  <div class="t hd" style="left:34px;top:12px">CONSOLE</div>
  <div class="t" style="left:130px;top:11px;font-size:12.500px">1</div>
  <div class="t" style="left:169px;top:11px;font-size:12.500px">0</div>
  <div class="t" style="left:209px;top:11px;font-size:12.500px">0</div>
  <div class="t" style="left:252px;top:10px;font-size:12.100px">0 audits found</div>
  <div class="t" style="left:361px;top:11px;font-size:11.900px">0 active jobs</div>
  <div class="t" style="left:1537px;top:11px;font-size:12px">modify selection</div>
  <svg class="abs" style="left:0;top:0" width="1630" height="35" viewBox="46 635 1630 35">
    <circle cx="63.100" cy="650.800" r="5.800" fill="none" stroke="#ff6600" stroke-width="2"/>
    <path d="M60.100 649.300h6l-3 4.100z" fill="#ff6600"/>
    <!-- info -->
    <circle cx="167" cy="651.500" r="3.900" fill="none" stroke="#9ba1a3" stroke-width="1"/>
    <path d="M167 650.800v2.900M167 649.100v1" stroke="#9ba1a3" stroke-width="1"/>
    <!-- warning -->
    <path d="M203.400 646.300l5.600 10h-11.200z" fill="#b1b8ba"/>
    <path d="M203.400 649.600v3.600M203.400 654v1.200" stroke="#20292b" stroke-width="1.200"/>
    <!-- error -->
    <circle cx="244" cy="652" r="4.600" fill="#b1b8ba"/>
    <path d="M242.300 650.300l3.400 3.400M245.700 650.300l-3.400 3.400" stroke="#20292b" stroke-width="1.100"/>
    <!-- clipboard -->
    <rect x="281.500" y="647.500" width="8.600" height="10.600" rx="1" fill="none" stroke="#b1b8ba" stroke-width="1.300"/>
    <rect x="283.600" y="646" width="4.400" height="2.800" fill="#b1b8ba"/>
    <path d="M283.700 653.200l1.600 1.600 2.800-3" fill="none" stroke="#b1b8ba" stroke-width="1.100"/>
    <!-- refresh -->
    <g fill="none" stroke="#b1b8ba" stroke-width="1.500">
      <path d="M391.600 651.200a4.700 4.700 0 0 1 8.200-2.500"/>
      <path d="M401 652.800a4.700 4.700 0 0 1-8.200 2.500"/>
    </g>
    <path d="M398.300 650.200l4.200.7.100-4zM394.300 653.800l-4.200-.7-.1 4z" fill="#b1b8ba"/>
  </svg>
  <!--STATUS-E-->
</div>

<!--ANNOT-S-->
<svg class="abs" style="left:0;top:0;pointer-events:none" width="1676" height="670" viewBox="0 0 1676 670">
  <g fill="none" stroke="#e8191c" stroke-width="3.600" stroke-linecap="round" stroke-linejoin="round">
    <path d="M29.500 140C45 139.600 62 140.200 78 141"/>
    <path d="M66 130.800C71 133.600 75.500 137.500 78.300 141.200 72.500 145 67 149.500 62.200 154.200"/>
    <path stroke-width="3.300" d="M1283.300 477.700C1294 478 1304 479.500 1313.200 481.400 1324 483.800 1334 487.500 1343 491.900 1351.500 496 1359 500.500 1365.400 505.300 1371.500 510 1376.500 515 1380.300 520.200 1384 525.200 1386.300 530.200 1386.300 535.100 1386.300 540.200 1384 544.500 1380.300 547.100 1376 550.200 1371 551.800 1365.400 552.300 1356 553.200 1346 552.200 1335.600 550.800 1325.500 549.600 1315.500 548.200 1305.700 546.300 1295.500 544.300 1285.500 541.900 1275.900 538.900 1269.500 536.800 1264 534 1259.400 530.700 1256 528 1255 524.300 1255 520.200 1255 515.700 1256.400 511.600 1259.400 508.300 1263.500 504.600 1269.500 502.300 1275.900 500.800 1285.500 498.600 1295.500 497.300 1305.700 497.100 1313.500 497 1321 497.600 1328.100 498.600 1335 499.600 1341.500 501.200 1347.500 503.100"/>
  </g>
</svg>
  <!--ANNOT-E-->
</body>
</html>
